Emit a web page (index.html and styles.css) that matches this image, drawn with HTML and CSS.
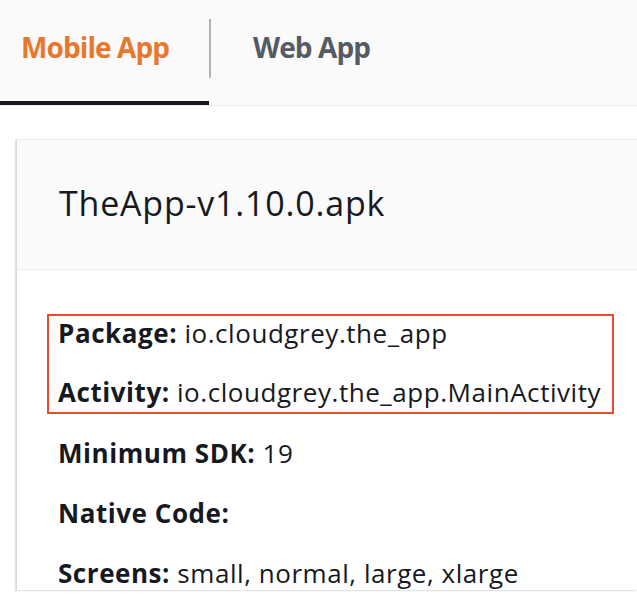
FILE: index.html
```html
<!DOCTYPE html>
<html lang="en">
<head>
<meta charset="utf-8">
<title>App details</title>
<link rel="stylesheet" href="styles.css">
</head>
<body>
<nav class="tabs">
  <div class="tab tab-active"><span class="tab-label">Mobile App</span></div>
  <div class="tab"><span class="tab-label">Web App</span></div>
</nav>
<main class="content">
  <section class="card">
    <header class="card-header">
      <h2 class="card-title">TheApp-v1.10.0.apk</h2>
    </header>
    <div class="card-body">
      <div class="highlight">
        <p class="row"><b>Package:</b> io.cloudgrey.the_app</p>
        <p class="row"><b>Activity:</b> io.cloudgrey.the_app.MainActivity</p>
      </div>
      <p class="row"><b>Minimum SDK:</b> 19</p>
      <p class="row"><b>Native Code:</b></p>
      <p class="row"><b>Screens:</b> small, normal, large, xlarge</p>
    </div>
  </section>
</main>
</body>
</html>
```

FILE: styles.css
```css
* { box-sizing: border-box; }

html, body {
  margin: 0;
  padding: 0;
  background: #ffffff;
  overflow: hidden;
}

body {
  font-family: "Open Sans", "Noto Sans", sans-serif;
  color: #16191f;
}

.tabs {
  display: flex;
  background: #fafafa;
  border-bottom: 1px solid #eaeded;
  height: 106px;
}

.tab {
  height: 105px;
  display: flex;
  align-items: flex-start;
  font-size: 28px;
  font-weight: 700;
  letter-spacing: -0.9px;
  color: #545b64;
  position: relative;
}

.tab-label {
  display: block;
  line-height: 38px;
  padding-top: 28px;
}

.tab-active {
  width: 209px;
  padding-left: 21px;
  color: #e8772e;
  border-bottom: 4px solid #16191f;
}

.tab-active::after {
  content: "";
  position: absolute;
  left: 209px;
  top: 19px;
  width: 2px;
  height: 59px;
  background: #aab7b8;
}

.tab + .tab {
  padding-left: 44px;
}

.content {
  padding: 33px 0 0 16px;
}

.card {
  border-top: 1px solid #eaeded;
  border-left: 1px solid #d5dbdb;
  box-shadow: -1px 1px 1px 0 rgba(0, 28, 36, 0.12);
}

.card-header {
  background: #fafafa;
  border-bottom: 1px solid #eaeded;
  padding: 40px 0 43px 42px;
}

.card-title {
  margin: 0;
  font-size: 34px;
  font-weight: 400;
  line-height: 46px;
  letter-spacing: 0.8px;
}

.card-body {
  padding: 44px 0 0 41px;
}

.highlight {
  width: 567px;
  margin-left: -11px;
  margin-bottom: 22px;
  padding: 0 0 3px 9px;
  border: 2px solid #ea4a2e;
}

.row {
  margin: 0 0 26px 0;
  font-size: 26px;
  line-height: 34px;
  letter-spacing: 0.55px;
  white-space: nowrap;
}

.highlight .row {
  margin-bottom: 25px;
}

.highlight .row:last-child {
  margin-bottom: 0;
}

.row b {
  font-weight: 700;
}
```
